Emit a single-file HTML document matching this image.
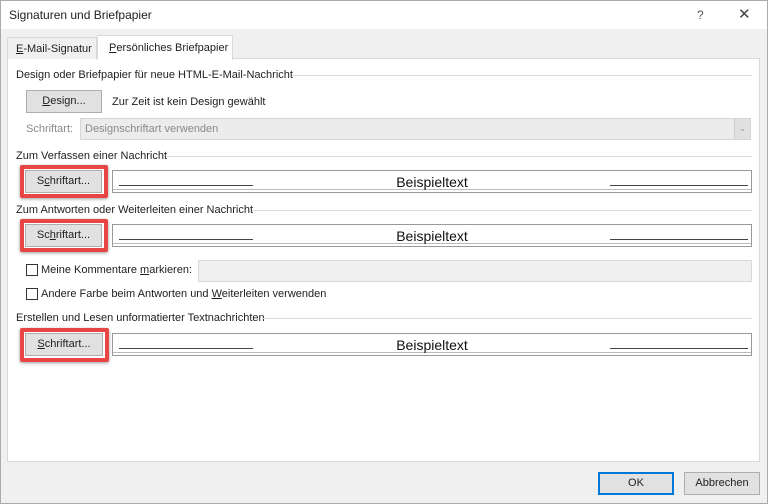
<!DOCTYPE html>
<html><head><meta charset="utf-8"><style>
*{box-sizing:border-box;margin:0;padding:0}
body{width:768px;height:504px;overflow:hidden;background:#f0f0f0;font-family:"Liberation Sans",sans-serif;font-size:11px;color:#1e1e1e;position:relative}
.a{position:absolute}
.title{left:0;top:0;width:768px;height:29px;background:#fff;border:1px solid #aaa;border-bottom:none}
.btn{position:absolute;background:#e1e1e1;border:1px solid #adadad;text-align:center;line-height:21px;font-size:11px}
.red{position:absolute;border:4px solid #e84545;border-radius:2px;box-shadow:0 1px 3px rgba(0,0,0,.4)}
.prev{position:absolute;left:112px;width:640px;height:23px;border:1px solid #999;background:#fff}
.prev .l{position:absolute;left:6px;top:14px;width:134px;border-top:1px solid #444}
.prev .r{position:absolute;right:3px;top:14px;width:138px;border-top:1px solid #444}
.prev .b{position:absolute;left:0;right:0;bottom:2px;border-top:1px solid #bbb}
.prev .t{position:absolute;left:0;right:0;top:3px;text-align:center;font-size:14px;color:#111}
.hd{position:absolute;left:16px;font-size:11px}
.ln{position:absolute;height:1px;background:#dcdcdc;right:16px}
.cb{position:absolute;left:26px;width:12px;height:12px;border:1px solid #333;background:#fff}
u{text-decoration:underline}
</style></head><body>
<div class="a title"></div>
<div class="a" style="left:9px;top:8px;font-size:12px">Signaturen und Briefpapier</div>
<div class="a" style="left:697px;top:8px;font-size:12px;color:#555">?</div>
<div class="a" style="left:738px;top:5px;font-size:15px;color:#444">✕</div>
<div class="a" style="left:0;top:29px;width:1px;height:475px;background:#aaa"></div>
<div class="a" style="right:0;top:29px;width:1px;height:475px;background:#aaa"></div>
<div class="a" style="left:0;bottom:0;width:768px;height:1px;background:#aaa"></div>
<div class="a" style="left:7px;top:58px;width:753px;height:404px;background:#fff;border:1px solid #dadada"></div>
<div class="a" style="left:7px;top:37px;width:90px;height:22px;border:1px solid #dadada;border-bottom:none;background:#f0f0f0;padding:5px 0 0 8px"><u>E</u>-Mail-Signatur</div>
<div class="a" style="left:97px;top:35px;width:136px;height:25px;border:1px solid #dadada;border-bottom:none;background:#fff;padding:6px 0 0 11px"><u>P</u>ersönliches Briefpapier</div>

<div class="hd" style="top:69px">Design oder Briefpapier für neue HTML-E-Mail-Nachricht</div>
<div class="ln" style="left:292px;top:75px"></div>
<div class="btn" style="left:26px;top:90px;width:76px;height:23px"><u>D</u>esign...</div>
<div class="a" style="left:112px;top:96px">Zur Zeit ist kein Design gewählt</div>
<div class="a" style="left:26px;top:123px;color:#8a8a8a">Schriftart:</div>
<div class="a" style="left:80px;top:118px;width:671px;height:22px;background:#ececec;border:1px solid #d5d5d5;padding:4px 0 0 4px;color:#8a8a8a">Designschriftart verwenden</div>
<div class="a" style="left:734px;top:119px;width:16px;height:20px;background:#e0e0e0;border-left:1px solid #ccc;color:#999;font-size:8px;text-align:center;line-height:20px">⌄</div>

<div class="hd" style="top:150px">Zum Verfassen einer Nachricht</div>
<div class="ln" style="left:167px;top:156px"></div>
<div class="red" style="left:20px;top:165px;width:88px;height:33px"></div>
<div class="btn" style="left:25px;top:170px;width:77px;height:23px">S<u>c</u>hriftart...</div>
<div class="prev" style="top:170px"><div class="l"></div><div class="r"></div><div class="b"></div><div class="t">Beispieltext</div></div>

<div class="hd" style="top:204px">Zum Antworten oder Weiterleiten einer Nachricht</div>
<div class="ln" style="left:252px;top:210px"></div>
<div class="red" style="left:20px;top:219px;width:88px;height:33px"></div>
<div class="btn" style="left:25px;top:224px;width:77px;height:23px">Sc<u>h</u>riftart...</div>
<div class="prev" style="top:224px"><div class="l"></div><div class="r"></div><div class="b"></div><div class="t">Beispieltext</div></div>

<div class="cb" style="top:264px"></div>
<div class="a" style="left:41px;top:264px">Meine Kommentare <u>m</u>arkieren:</div>
<div class="a" style="left:198px;top:260px;width:554px;height:22px;background:#f0f0f0;border:1px solid #d8d8d8"></div>
<div class="cb" style="top:288px"></div>
<div class="a" style="left:41px;top:288px">Andere Farbe beim Antworten und <u>W</u>eiterleiten verwenden</div>

<div class="hd" style="top:312px">Erstellen und Lesen unformatierter Textnachrichten</div>
<div class="ln" style="left:262px;top:318px"></div>
<div class="red" style="left:20px;top:328px;width:89px;height:34px"></div>
<div class="btn" style="left:25px;top:333px;width:78px;height:23px"><u>S</u>chriftart...</div>
<div class="prev" style="top:333px"><div class="l"></div><div class="r"></div><div class="b"></div><div class="t">Beispieltext</div></div>

<div class="btn" style="left:598px;top:472px;width:76px;height:23px;border:2px solid #0078d7;line-height:19px">OK</div>
<div class="btn" style="left:684px;top:472px;width:76px;height:23px">Abbrechen</div>
</body></html>
